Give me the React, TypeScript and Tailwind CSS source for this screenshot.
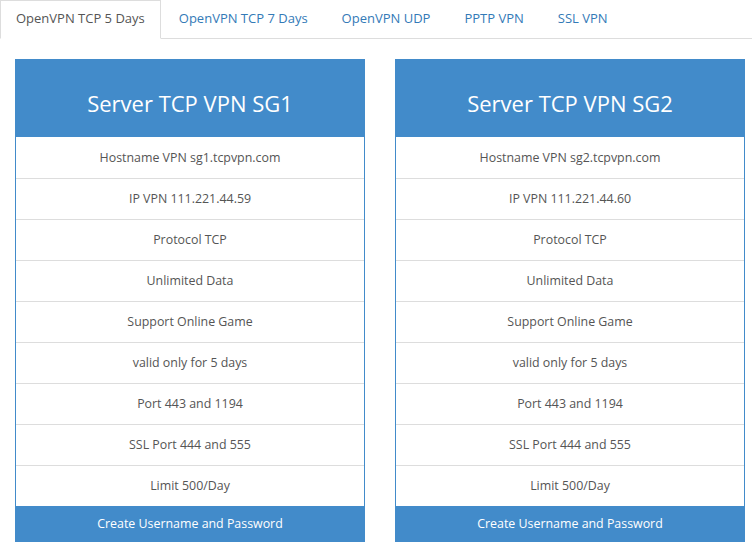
import React, { useState } from 'react';

type Server = {
  name: string;
  host: string;
  ip: string;
};

const tabs = ['OpenVPN TCP 5 Days', 'OpenVPN TCP 7 Days', 'OpenVPN UDP', 'PPTP VPN', 'SSL VPN'];

const servers: Server[] = [
  { name: 'Server TCP VPN SG1', host: 'sg1.tcpvpn.com', ip: '111.221.44.59' },
  { name: 'Server TCP VPN SG2', host: 'sg2.tcpvpn.com', ip: '111.221.44.60' },
];

const ServerCard: React.FC<{ server: Server }> = ({ server }) => {
  const rows = [
    `Hostname VPN ${server.host}`,
    `IP VPN ${server.ip}`,
    'Protocol TCP',
    'Unlimited Data',
    'Support Online Game',
    'valid only for 5 days',
    'Port 443 and 1194',
    'SSL Port 444 and 555',
    'Limit 500/Day',
  ];

  return (
    <div className="w-[350px] shrink-0 border border-[#428bca] flex flex-col">
      {/* Title */}
      <div className="h-[77px] bg-[#428bca] flex items-center justify-center text-white text-[22px] pt-[10px]">
        {server.name}
      </div>

      {/* Features */}
      <ul>
        {rows.map((row, i) => (
          <li
            key={row}
            className={`h-[41px] flex items-center justify-center text-[12.4px] text-[#555] bg-white pt-[1px] ${
              i === 0 ? 'h-[40px]' : 'border-t border-[#ddd]'
            }`}
          >
            {row}
          </li>
        ))}
      </ul>

      <button className="h-[35px] bg-[#428bca] text-white text-[12.4px] flex items-center justify-center pt-[1px]">
        Create Username and Password
      </button>
    </div>
  );
};

const App: React.FC = () => {
  const [active, setActive] = useState(0);

  return (
    <div className="w-[752px] h-[546px] bg-white overflow-hidden" style={{ fontFamily: '"Open Sans", "Noto Sans", sans-serif' }}>
      {/* Tabs */}
      <ul className="flex border-b border-[#ddd] h-[39px]">
        {tabs.map((tab, i) => (
          <li key={tab} className="mr-[2px] -mb-px">
            <button
              onClick={() => setActive(i)}
              className={`h-[39px] px-[15px] pb-[1px] text-[13px] border ${
                active === i
                  ? 'text-[#555] bg-white border-[#ddd] border-b-white'
                  : 'text-[#337ab7] border-transparent'
              }`}
            >
              {tab}
            </button>
          </li>
        ))}
      </ul>

      {/* Server cards */}
      <div className="flex gap-[30px] pl-[15px] pt-[20px]">
        {servers.map((s) => (
          <ServerCard key={s.name} server={s} />
        ))}
      </div>
    </div>
  );
};

export default App;
